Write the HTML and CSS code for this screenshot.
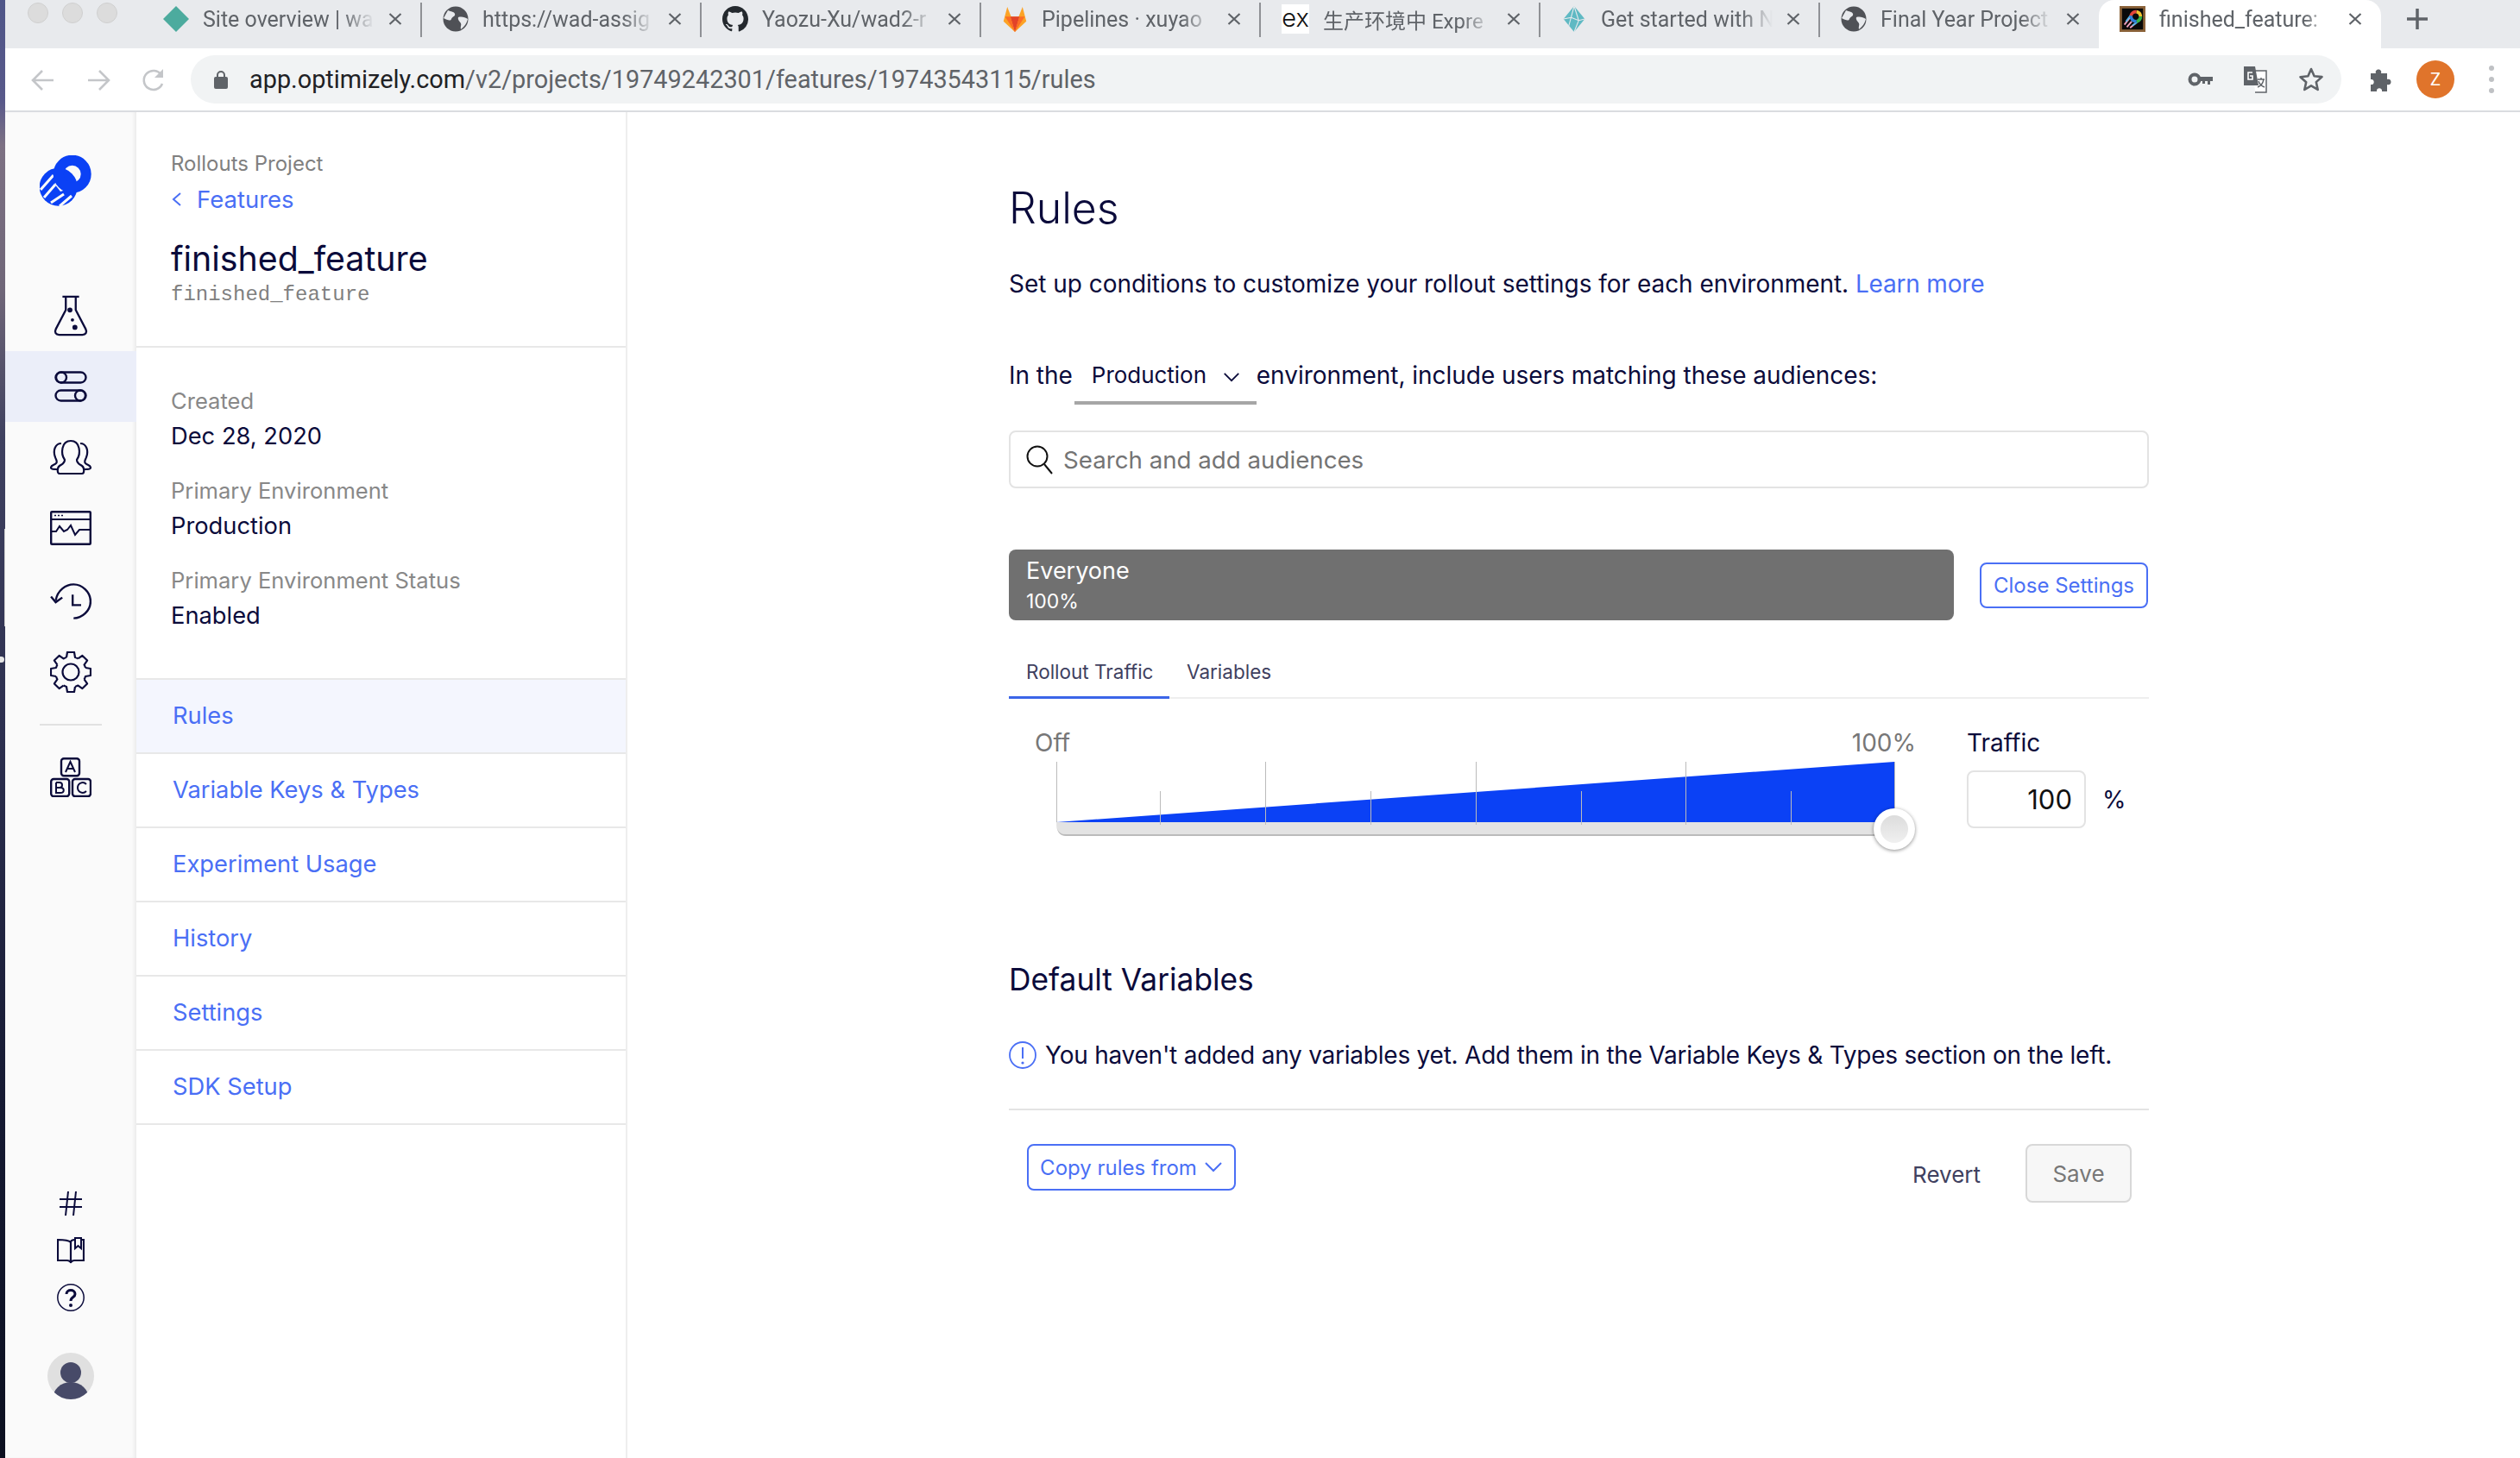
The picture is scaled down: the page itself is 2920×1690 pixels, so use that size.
FILE: index.html
```html
<!DOCTYPE html>
<html lang="en">
<head>
<meta charset="utf-8">
<title>finished_feature: Rules</title>
<link rel="stylesheet" href="styles.css">
</head>
<body>
<div class="wallpaper"></div>
<div class="browser">
  <svg width="0" height="0" class="sprite"><defs><symbol id="x" viewBox="0 0 16 14"><path d="M1.500 1l13 12M14.500 1l-13 12" fill="none" stroke="#5f6368" stroke-width="2.200"/></symbol></defs></svg>
  <div class="tabstrip">
    <div class="lights"><span></span><span></span><span></span></div>
    <div class="tab"><svg class="fav" viewBox="0 0 30 30"><path d="M15 0 30 15 15 30 0 15Z" fill="#4cab9e"/></svg><span class="tab-title">Site overview | wa</span><svg class="tab-x"><use href="#x"/></svg></div>
    <div class="tab"><svg class="fav" viewBox="0 0 30 30"><circle cx="15" cy="15" r="14.500" fill="#4f5156"/><path d="M6 5c4 2 7 1 8 4s-3 3-4 6-5 1-9-1ZM18 13c4-1 8 0 11 2-1 5-4 9-8 12-1-3 1-5 0-7s-4-4-3-7Z" fill="#e8eaed"/></svg><span class="tab-title">https://wad-assig</span><svg class="tab-x"><use href="#x"/></svg></div>
    <div class="tab"><svg class="fav" viewBox="0 0 16 16"><path fill="#24292e" d="M8 0C3.580 0 0 3.580 0 8c0 3.540 2.290 6.530 5.470 7.590.4.070.55-.17.55-.38v-1.340c-2.230.48-2.690-.95-2.690-.95-.36-.92-.89-1.170-.89-1.170-.73-.5.050-.49.050-.49.8.060 1.230.82 1.230.82.72 1.220 1.870.87 2.330.67.070-.52.28-.87.5-1.070-1.780-.2-3.640-.89-3.640-3.950 0-.87.31-1.590.82-2.150-.08-.2-.36-1.020.080-2.120 0 0 .67-.21 2.200.82a7.600 7.600 0 0 1 4 0c1.530-1.040 2.200-.82 2.200-.82.44 1.100.16 1.920.080 2.120.51.56.82 1.270.82 2.150 0 3.070-1.870 3.750-3.650 3.950.29.25.54.73.54 1.480v2.200c0 .21.15.46.55.38A8 8 0 0 0 16 8c0-4.420-3.580-8-8-8Z"/></svg><span class="tab-title">Yaozu-Xu/wad2-r</span><svg class="tab-x"><use href="#x"/></svg></div>
    <div class="tab"><svg class="fav" viewBox="0 0 32 34"><path d="M16 34 1 20 6 1l5 13h10l5-13 5 19Z" fill="#fca326"/><path d="M16 34 10 14h12Z" fill="#e24329"/><path d="M16 34 10 14H3ZM16 34l6-20h7Z" fill="#fc6d26"/></svg><span class="tab-title">Pipelines · xuyao</span><svg class="tab-x"><use href="#x"/></svg></div>
    <div class="tab"><span class="fav-ex">ex</span><span class="tab-title tab-cjk">生产环境中 Expre</span><svg class="tab-x"><use href="#x"/></svg></div>
    <div class="tab"><svg class="fav" viewBox="0 0 30 34"><path d="M15 0 29 17 15 34 1 17Z" fill="#5fb9c3"/><path d="M15 0 11 15 1 17M11 15l10 4 8-2M21 19l-6 15M11 15l-3 11M15 0l6 19" fill="none" stroke="#e8eaed" stroke-width="1.200"/></svg><span class="tab-title">Get started with N</span><svg class="tab-x"><use href="#x"/></svg></div>
    <div class="tab"><svg class="fav" viewBox="0 0 30 30"><circle cx="15" cy="15" r="14.500" fill="#4f5156"/><path d="M6 5c4 2 7 1 8 4s-3 3-4 6-5 1-9-1ZM18 13c4-1 8 0 11 2-1 5-4 9-8 12-1-3 1-5 0-7s-4-4-3-7Z" fill="#e8eaed"/></svg><span class="tab-title">Final Year Project</span><svg class="tab-x"><use href="#x"/></svg></div>
    <div class="tab tab-active"><svg class="fav fav-square" viewBox="0 0 32 32"><rect width="32" height="32" fill="#8b6239"/><rect x="3" y="3" width="26" height="26" fill="#0a0a0a"/><path d="M6 23l7-9M9 26l6-7M13 27l7-6" stroke="#f0a0c0" stroke-width="2"/><path d="M8 19l6-8M16 24l6-4" stroke="#58b8e8" stroke-width="2"/><path d="M14 12a6.500 6.500 0 0 1 7-5" fill="none" stroke="#e2453b" stroke-width="4"/><path d="M21 7a6.500 6.500 0 0 1 5 6" fill="none" stroke="#f2c230" stroke-width="4"/><path d="M26 13a6.500 6.500 0 0 1-5 6" fill="none" stroke="#35b44a" stroke-width="4"/><path d="M21 19a6.500 6.500 0 0 1-7-7" fill="none" stroke="#2f7fd8" stroke-width="4"/></svg><span class="tab-title">finished_feature:</span><svg class="tab-x"><use href="#x"/></svg></div>
    <svg class="tab-new" viewBox="0 0 24 24"><path d="M12 0v24M0 12h24" stroke="#5f6368" stroke-width="3.500"/></svg>
  </div>
  <div class="toolbar">
    <svg class="tool-ic" viewBox="0 0 30 30"><path d="M27 15H4M14 4 3 15l11 11" fill="none" stroke="#c4c6c9" stroke-width="2.600"/></svg>
    <svg class="tool-ic" viewBox="0 0 30 30"><path d="M3 15h23M16 4l11 11-11 11" fill="none" stroke="#c4c6c9" stroke-width="2.600"/></svg>
    <svg class="tool-ic" viewBox="0 0 30 30"><path d="M25 19a11 11 0 1 1-1-10" fill="none" stroke="#c4c6c9" stroke-width="2.600"/><path d="M26 2v10H16Z" fill="#c4c6c9"/></svg>
    <div class="omnibox">
      <svg class="lock" viewBox="0 0 16 22"><path d="M4 9V6a4 4 0 0 1 8 0v3" fill="none" stroke="#5f6368" stroke-width="2"/><rect y="8" width="16" height="14" rx="2" fill="#5f6368"/></svg>
      <span class="url"><b>app.optimizely.com</b>/v2/projects/19749242301/features/19743543115/rules</span>
      <svg class="omni-key" viewBox="0 0 30 20"><circle cx="8" cy="10" r="5.500" fill="none" stroke="#5f6368" stroke-width="4"/><path d="M13 7h16v5h-3v4h-3v-4h-3v3h-3v-3h-4Z" fill="#5f6368"/></svg>
      <svg class="omni-tr" viewBox="0 0 28 32"><path d="M12 6h15v25H14" fill="#fff" stroke="#5f6368" stroke-width="1.500"/><path d="M1 1h13l4 22H1Z" fill="#5f6368"/><path d="M11 8H6v8h5v-4H8" fill="none" stroke="#fff" stroke-width="1.600"/><path d="M17 16h8M21 14v2M24 16c-1 5-4 8-7 9M18 18c1 3 4 6 7 7" fill="none" stroke="#5f6368" stroke-width="1.400"/></svg>
      <svg class="omni-star" viewBox="0 0 30 30"><path d="M15 3l3.600 8.200 8.900.9-6.700 6 1.900 8.800L15 22.400 7.300 27l1.900-8.800-6.700-6 8.900-.9Z" fill="none" stroke="#5f6368" stroke-width="2.600" stroke-linejoin="round"/></svg>
    </div>
    <svg class="puzzle" viewBox="0 0 28 30"><path d="M2 8h6c-2-6 8-6 6 0h7v7c6-2 6 8 0 6v8h-6c1-5-7-5-6 0H2v-8c5 1 5-7 0-6Z" fill="#5f6368"/></svg>
    <div class="profile">Z</div>
    <div class="kebab"><i></i><i></i><i></i></div>
  </div>
  <div class="app">
    <nav class="rail">
      <svg class="rail-logo" viewBox="0 0 60 60">
        <circle cx="21.700" cy="36.700" r="22" fill="#0b41f5"/>
        <path d="M1 40 16 23M5 49 18 34M13 55 28 45M23 59 37 47" stroke="#fafafa" stroke-width="3"/>
        <path d="M17 33 24 28 30 40 24 42Z" fill="#fafafa"/>
        <circle cx="37.700" cy="21.700" r="16" fill="none" stroke="#0b41f5" stroke-width="12"/>
      </svg>
      <div class="rail-item"><svg viewBox="0 0 40 50"><path d="M10 2h20M14 2v16L2 41c-2 4 0 7 4 7h28c4 0 6-3 4-7L26 18V2" fill="none" stroke="#0b0b3b" stroke-width="2.400"/><circle cx="19" cy="18" r="3" fill="#0b0b3b"/><circle cx="22" cy="30" r="2" fill="#0b0b3b"/><circle cx="25" cy="39" r="3" fill="#0b0b3b"/></svg></div>
      <div class="rail-item rail-active"><svg viewBox="0 0 38 36"><rect x="1.500" y="1.500" width="35" height="12" rx="6" fill="none" stroke="#0b0b3b" stroke-width="2.400"/><circle cx="8" cy="7.500" r="6" fill="none" stroke="#0b0b3b" stroke-width="2.400"/><rect x="1.500" y="22.500" width="35" height="12" rx="6" fill="none" stroke="#0b0b3b" stroke-width="2.400"/><circle cx="30" cy="28.500" r="6" fill="none" stroke="#0b0b3b" stroke-width="2.400"/></svg></div>
      <div class="rail-item"><svg viewBox="0 0 48 40"><path d="M17 23C12 16 13 1 24 1S36 16 31 23C31 27 34 28 37 30 40 32 40 39 37 39H11C8 39 8 32 11 30 14 28 17 27 17 23Z" fill="none" stroke="#0b0b3b" stroke-width="2.200"/><path d="M13 4C6 4 3 12 6 20 7 23 9 25 7 27 5 29 1 29 1 32 1 34 4 34 8 34M35 4C42 4 45 12 42 20 41 23 39 25 41 27 43 29 47 29 47 32 47 34 44 34 40 34" fill="none" stroke="#0b0b3b" stroke-width="2.200"/></svg></div>
      <div class="rail-item"><svg viewBox="0 0 48 40"><rect x="1.200" y="1.200" width="45.600" height="37.600" rx="1" fill="none" stroke="#0b0b3b" stroke-width="2.400"/><path d="M1 10h46" stroke="#0b0b3b" stroke-width="2"/><path d="M5 5.500h2M9 5.500h2M13 5.500h2" stroke="#0b0b3b" stroke-width="1.600"/><path d="M1 24h6l4-6 5 6 4-2 4-5 5 11 5-6h14" fill="none" stroke="#0b0b3b" stroke-width="2"/></svg></div>
      <div class="rail-item rail-history"><svg viewBox="0 0 44 38"><path d="M6 18C8 7 17 1 25 1c9 0 18 8 18 18s-9 18-18 18" fill="none" stroke="#0b0b3b" stroke-width="2.200"/><path d="M1 14l5 6 7-5" fill="none" stroke="#0b0b3b" stroke-width="2.200"/><path d="M24 12v11h9" fill="none" stroke="#0b0b3b" stroke-width="2.200"/></svg></div>
      <div class="rail-item"><svg viewBox="-24 -24 48 48"><defs><path id="cog" d="M-5-17-4-23H4L5-17A17.700 17.700 0 0 1 8.490-15.560" fill="none" stroke="#0b0b3b" stroke-width="2.200" stroke-linejoin="round"/></defs><use href="#cog"/><use href="#cog" transform="rotate(45)"/><use href="#cog" transform="rotate(90)"/><use href="#cog" transform="rotate(135)"/><use href="#cog" transform="rotate(180)"/><use href="#cog" transform="rotate(225)"/><use href="#cog" transform="rotate(270)"/><use href="#cog" transform="rotate(315)"/><circle r="9.500" fill="none" stroke="#0b0b3b" stroke-width="2.200"/></svg></div>
      <hr class="rail-divider">
      <svg class="rail-abc" viewBox="0 0 48 46"><rect x="13" y="1.200" width="21" height="20" rx="3" fill="none" stroke="#0b0b3b" stroke-width="2.400"/><rect x="1.200" y="25" width="21" height="20" rx="3" fill="none" stroke="#0b0b3b" stroke-width="2.400"/><rect x="26" y="25" width="21" height="20" rx="3" fill="none" stroke="#0b0b3b" stroke-width="2.400"/><path d="M18 17 23.500 5 29 17M20 13h7M7 29v12h5c5 0 5-6 0-6H7M7 35h4c4 0 4-6 0-6H7M42 31c-4-4-10-1-10 4s6 8 10 4" fill="none" stroke="#0b0b3b" stroke-width="2"/></svg>
      <div class="rail-bottom">
        <svg class="rail-hash" viewBox="0 0 26 30"><path d="M10 1 7 29M19 1l-3 28M0 10h26M0 19h26" fill="none" stroke="#0b0b3b" stroke-width="2"/></svg>
        <svg class="rail-book" viewBox="0 0 32 32"><path d="M16 6C13 3 6 3 1 3v24h11c2 0 3 1 4 2 1-1 2-2 4-2h11V3h-3M16 6v24M21 3c-3 0-5 1-5 3" fill="none" stroke="#0b0b3b" stroke-width="2.200"/><path d="M21 1h7v12l-3.500-3-3.500 3Z" fill="#fafafa" stroke="#0b0b3b" stroke-width="2"/></svg>
        <svg class="rail-help" viewBox="0 0 32 32"><circle cx="16" cy="16" r="15.200" fill="none" stroke="#0b0b3b" stroke-width="1.500"/><path d="M11 12c0-6 10-6 10 0 0 4-5 3-5 8" fill="none" stroke="#0b0b3b" stroke-width="3"/><circle cx="16" cy="25" r="2" fill="#0b0b3b"/></svg>
        <svg class="rail-avatar" viewBox="0 0 54 54"><defs><clipPath id="avatar-clip"><circle cx="27" cy="27" r="27"/></clipPath></defs><circle cx="27" cy="27" r="27" fill="#e0e0e0"/><g clip-path="url(#avatar-clip)" fill="#474a68"><circle cx="27" cy="23" r="12"/><ellipse cx="27" cy="54" rx="21" ry="20"/></g></svg>
      </div>
    </nav>
    <aside class="sidebar">
      <header class="side-head">
        <div class="side-project">Rollouts Project</div>
        <a class="side-back"><svg viewBox="0 0 13 18"><path d="M11 2 3 9l8 7" fill="none" stroke="#4a6ff5" stroke-width="2"/></svg>Features</a>
        <div class="side-title">finished_feature</div>
        <div class="side-key">finished_feature</div>
      </header>
      <dl class="side-meta">
        <dt>Created</dt><dd>Dec 28, 2020</dd>
        <dt>Primary Environment</dt><dd>Production</dd>
        <dt>Primary Environment Status</dt><dd>Enabled</dd>
      </dl>
      <ul class="side-nav">
        <li class="side-nav-active">Rules</li>
        <li>Variable Keys &amp; Types</li>
        <li>Experiment Usage</li>
        <li>History</li>
        <li>Settings</li>
        <li>SDK Setup</li>
      </ul>
    </aside>
    <main class="main">
      <h1 class="title">Rules</h1>
      <p class="desc">Set up conditions to customize your rollout settings for each environment. <a class="link">Learn more</a></p>
      <div class="env-row">
        <span>In the</span>
        <div class="env-select"><span>Production</span><svg viewBox="0 0 20 12"><path d="M1 1l9 9 9-9" fill="none" stroke="#0b0b3b" stroke-width="2"/></svg></div>
        <span>environment, include users matching these audiences:</span>
      </div>
      <div class="search">
        <svg viewBox="0 0 32 34"><circle cx="13" cy="13" r="11.500" fill="none" stroke="#111" stroke-width="2"/><path d="M21 22l9 11" stroke="#111" stroke-width="2"/></svg>
        <span>Search and add audiences</span>
      </div>
      <div class="rollout-row">
        <div class="rollout-block"><div class="rollout-name">Everyone</div><div class="rollout-pct">100%</div></div>
        <button class="btn-outline btn-close">Close Settings</button>
      </div>
      <div class="tabs">
        <span class="tabs-item tabs-active">Rollout Traffic</span>
        <span class="tabs-item">Variables</span>
      </div>
      <div class="traffic">
        <div class="slider">
          <div class="slider-labels"><span>Off</span><span>100%</span></div>
          <svg class="slider-svg" viewBox="0 0 1110 110" width="1110" height="110">
            <defs><linearGradient id="thumb-fill" x1="0" y1="0" x2="0" y2="1"><stop offset="0" stop-color="#dcdcdc"/><stop offset="1" stop-color="#f0f0f0"/></linearGradient></defs>
            <path d="M55 2V72h1V2ZM1026 2h1v70h-1Z" fill="#bbb"/>
            <path d="M55 72 1026 2V72Z" fill="#0b41f5"/>
            <path d="M55 72H1026V86H66Q55 86 55 72Z" fill="#e3e3e3"/>
            <path d="M55 72Q55 86 66 86H1026V88H66Q55 88 55 72Z" fill="#bbb"/>
            <path d="M175 36h1V75h-1ZM297 2h1V75h-1ZM419 36h1V75h-1ZM541 2h1V75h-1ZM663 36h1V75h-1ZM784 2h1V75h-1ZM906 36h1V75h-1Z" fill="#bbb"/>
            <circle class="slider-thumb" cx="1026" cy="80" r="24"/>
            <circle cx="1026" cy="80" r="16" fill="url(#thumb-fill)"/>
          </svg>
        </div>
        <div class="traffic-field">
          <div class="traffic-label">Traffic</div>
          <div class="traffic-input-row"><div class="traffic-input">100</div><span>%</span></div>
        </div>
      </div>
      <h2 class="subtitle">Default Variables</h2>
      <div class="alert">
        <svg viewBox="0 0 32 32"><circle cx="16" cy="16" r="15" fill="none" stroke="#4a6ff5" stroke-width="1.800"/><path d="M16 7v13" stroke="#4a6ff5" stroke-width="2"/><circle cx="16" cy="25" r="1.600" fill="#4a6ff5"/></svg>
        <span>You haven't added any variables yet. Add them in the Variable Keys &amp; Types section on the left.</span>
      </div>
      <hr class="rule">
      <div class="actions">
        <button class="btn-outline btn-copy">Copy rules from<svg viewBox="0 0 20 12"><path d="M1 1l9 9 9-9" fill="none" stroke="#4a6ff5" stroke-width="2"/></svg></button>
        <span class="revert">Revert</span>
        <button class="btn-save">Save</button>
      </div>
    </main>
  </div>
</div>
</body>
</html>
```

FILE: styles.css
```css
* { box-sizing: border-box; }
html, body { margin: 0; height: 100%; }
body { display: flex; height: 1690px; overflow: hidden; background: #fff; font-family: Inter, "Noto Sans CJK SC", sans-serif; color: #0b0b3b; }
.wallpaper { width: 6px; flex: none; position: relative; background: linear-gradient(#4f5688 0, #59598a 7%, #7d7183 10%, #6f6678 20%, #3f4160 30%, #2d3050 50%, #161a33 75%, #0c1020 100%); }
.wallpaper::before { content: ""; position: absolute; right: 0; top: 613px; width: 1px; height: 113px; background: #cfcfcf; }
.wallpaper::after { content: ""; position: absolute; left: 0; top: 761px; width: 5px; height: 7px; border-radius: 0 4px 4px 0; background: #e6e6e6; }
.browser { flex: 1; display: flex; flex-direction: column; min-width: 0; }
.sprite { position: absolute; }

.tabstrip { height: 56px; flex: none; display: flex; background: #e8eaed; font-family: Roboto, "Noto Sans CJK SC", sans-serif; font-size: 25px; color: #5f6368; }
.lights { width: 158px; flex: none; display: flex; gap: 16px; padding: 3px 0 0 26px; }
.lights span { width: 24px; height: 24px; border-radius: 50%; background: #dcdcdc; border: 1px solid #d0d0d0; }
.tab { width: 324px; flex: none; height: 56px; display: flex; align-items: center; padding: 0 22px 12px 25px; position: relative; }
.tab::after { content: ""; position: absolute; right: -1px; top: 3px; height: 40px; width: 2px; background: #8f9195; }
.tab-active { width: 327px; background: #fff; border-radius: 18px 18px 0 0; padding-left: 24px; }
.tab-active::after, .tab:nth-last-child(3)::after { display: none; }
.fav { width: 30px; height: 30px; flex: none; }
.fav-ex { width: 32px; height: 34px; flex: none; background: #fff; color: #111; font: 300 29px/32px Inter, sans-serif; text-align: center; }
.tab-title { flex: 1; min-width: 0; margin-left: 16px; white-space: nowrap; overflow: hidden; -webkit-mask-image: linear-gradient(90deg, #000 calc(100% - 45px), transparent calc(100% - 8px)); mask-image: linear-gradient(90deg, #000 calc(100% - 45px), transparent calc(100% - 8px)); }
.tab-cjk { font-size: 24px; }
.tab-x { flex: none; width: 16px; height: 14px; margin-left: 8px; }
.tab-new { width: 24px; height: 24px; margin: 10px 0 0 30px; flex: none; }

.toolbar { height: 74px; flex: none; display: flex; align-items: flex-start; padding: 8px 0 0 29px; background: #fff; border-bottom: 2px solid #dadce0; }
.tool-ic { width: 30px; height: 30px; margin: 14px 34px 0 0; flex: none; }
.omnibox { width: 2492px; height: 56px; margin-left: -6px; display: flex; align-items: center; padding: 0 20px 0 27px; background: #f1f3f4; border-radius: 28px; }
.lock { width: 16px; height: 22px; flex: none; }
.url { flex: 1; margin-left: 25px; font: 28.850px/40px Roboto, sans-serif; color: #5f6368; white-space: nowrap; }
.url b { font-weight: 400; color: #202124; }
.omni-key { width: 30px; height: 20px; flex: none; }
.omni-tr { width: 28px; height: 32px; margin-left: 34px; flex: none; }
.omni-star { width: 30px; height: 30px; margin-left: 36px; flex: none; }
.puzzle { width: 28px; height: 30px; margin: 13px 0 0 32px; flex: none; }
.profile { width: 44px; height: 44px; margin: 6px 0 0 27px; flex: none; border-radius: 50%; background: #e0742b; color: #fff; font: 20px/44px Roboto, sans-serif; text-align: center; }
.kebab { margin: 12px 0 0 40px; display: flex; flex-direction: column; gap: 7px; }
.kebab i { width: 6px; height: 6px; border-radius: 50%; background: #bfc1c4; }

.app { flex: 1; display: flex; min-height: 0; }
.rail { width: 152px; flex: none; display: flex; flex-direction: column; align-items: center; background: #fafafa; box-shadow: inset -4px 0 4px -2px rgba(0,0,0,.07); padding-top: 50px; padding-bottom: 68px; }
.rail-logo { width: 60px; height: 60px; margin: 0 12px 85px 0; flex: none; }
.rail-item { width: 100%; height: 82px; flex: none; display: flex; align-items: center; justify-content: center; }
.rail-item svg { width: 48px; height: 48px; }
.rail-active { background: #ebeef9; }
.rail-active svg { height: 36px; }
.rail-history { margin-top: 3px; }
.rail-divider { width: 72px; height: 2px; margin: 19px 0 37px; flex: none; border: 0; background: #e1e1e1; }
.rail-abc { width: 48px; height: 46px; flex: none; }
.rail-bottom { margin-top: auto; display: flex; flex-direction: column; align-items: center; }
.rail-hash { width: 26px; height: 30px; }
.rail-book { width: 32px; height: 32px; margin-top: 24px; }
.rail-help { width: 32px; height: 32px; margin-top: 22px; }
.rail-avatar { width: 54px; height: 54px; margin-top: 48px; }

.sidebar { width: 569px; flex: none; background: #fff; border-right: 2px solid #eee; }
.side-head { height: 273px; padding: 45px 0 0 40px; border-bottom: 2px solid #e8e8e8; }
.side-project { font-size: 24px; line-height: 30px; color: #808080; }
.side-back { display: flex; align-items: center; margin-top: 8px; font-size: 27.500px; line-height: 36px; color: #4a6ff5; }
.side-back svg { width: 13px; height: 18px; margin-right: 17px; }
.side-title { margin-top: 26px; font-size: 39.300px; line-height: 50px; color: #0b0b3b; }
.side-key { margin-top: 3px; font: 24px/28px "Liberation Mono", monospace; color: #808080; }
.side-meta { margin: 0; height: 383px; padding: 40px 0 0 40px; }
.side-meta dt { font-size: 25.600px; line-height: 43px; color: #888; }
.side-meta dd { margin: 0 0 21px; font-size: 27.300px; line-height: 40px; color: #0b0b3b; }
.side-nav { margin: 0; padding: 0; list-style: none; border-top: 2px solid #e8e8e8; }
.side-nav li { height: 86px; padding-left: 42px; font-size: 27.300px; line-height: 84px; color: #4a6ff5; border-bottom: 2px solid #e8e8e8; }
.side-nav-active { background: #f4f6fe; }

.main { flex: 1; min-width: 0; padding-left: 442px; }
.title { margin: 81px 0 0; font-size: 50px; font-weight: 300; line-height: 60px; color: #0b0b3b; }
.desc { margin: 38px 0 0; font-size: 28px; line-height: 40px; color: #0b0b3b; letter-spacing: -.03px; }
.link { color: #4a6ff5; letter-spacing: -.2px; }
.env-row { height: 54px; margin-top: 66px; display: flex; font-size: 28px; line-height: 40px; letter-spacing: -.03px; }
.env-select { width: 211px; height: 54px; margin-left: 2px; display: flex; padding-left: 20px; gap: 19px; border-bottom: 4px solid #a6a6a6; font-size: 26px; align-self: flex-start; }
.env-select svg { width: 20px; height: 11px; margin-top: 17px; }
.search { width: 1321px; height: 67px; margin-top: 30px; display: flex; align-items: center; padding-left: 18px; border: 2px solid #e3e3e3; border-radius: 8px; font-size: 27.700px; color: #747474; }
.search svg { width: 32px; height: 34px; margin-right: 11px; }
.rollout-row { margin-top: 71px; display: flex; align-items: center; gap: 30px; width: 1321px; }
.rollout-block { width: 1095px; height: 82px; padding: 6px 20px; background: #707070; border-radius: 8px; color: #fff; }
.rollout-name { font-size: 27px; line-height: 38px; }
.rollout-pct { font-size: 23px; line-height: 32px; }
.btn-outline { display: flex; align-items: center; justify-content: center; background: #fff; border: 2px solid #4a6ff5; border-radius: 8px; color: #4a6ff5; font-family: Inter, sans-serif; font-size: 24px; padding: 0; }
.btn-close { width: 195px; height: 53px; }
.tabs { width: 1321px; height: 50px; margin-top: 41px; display: flex; border-bottom: 2px solid #eee; font-size: 22.500px; color: #3f4160; }
.tabs-item { height: 50px; line-height: 38px; padding: 0 20px; white-space: nowrap; }
.tabs-active { width: 186px; border-bottom: 3px solid #3b65e8; }
.traffic { height: 151px; margin-top: 31px; display: flex; }
.slider { width: 1109px; flex: none; }
.slider-labels { height: 40px; display: flex; justify-content: space-between; padding: 0 58px 0 30px; font-size: 28px; line-height: 40px; color: #777; }
.slider-svg { display: block; overflow: visible; }
.slider-thumb { fill: #fff; filter: drop-shadow(0 1px 2px rgba(0,0,0,.45)); }
.traffic-field { margin-left: 1px; }
.traffic-label { font-size: 28px; line-height: 40px; }
.traffic-input-row { margin-top: 12px; display: flex; align-items: center; gap: 19px; font-size: 28px; }
.traffic-input { width: 138px; height: 67px; padding-right: 14px; border: 2px solid #e3e3e3; border-radius: 8px; font-size: 31px; line-height: 63px; text-align: right; color: #111; }
.subtitle { margin: 119px 0 0; font-size: 35.300px; font-weight: 400; line-height: 50px; }
.alert { margin-top: 42px; height: 40px; display: flex; align-items: center; gap: 10px; font-size: 28px; line-height: 40px; white-space: nowrap; letter-spacing: -.23px; }
.alert svg { width: 32px; height: 32px; flex: none; }
.rule { width: 1321px; height: 2px; margin: 42px 0 0; border: 0; background: #e3e3e3; }
.actions { width: 1321px; margin-top: 39px; display: flex; align-items: flex-start; padding: 0 20px 0 21px; }
.btn-copy { width: 242px; height: 54px; gap: 8px; }
.btn-copy svg { width: 22px; height: 12px; }
.revert { margin: 16px 0 0 auto; font-size: 26px; line-height: 40px; color: #3f4160; }
.btn-save { width: 123px; height: 68px; margin-left: 52px; padding: 0; background: #f7f7f7; border: 2px solid #d8d8d8; border-radius: 8px; font: 26px Inter, sans-serif; color: #777; }
```
